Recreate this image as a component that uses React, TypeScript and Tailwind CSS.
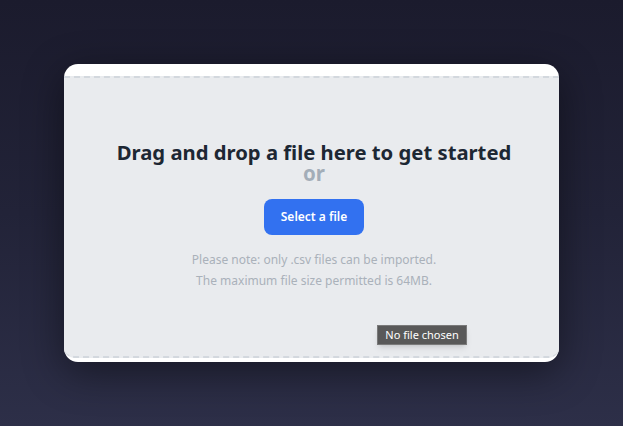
import React from 'react';

const font = { fontFamily: '"Noto Sans", "Open Sans", Arial, sans-serif' };

const App: React.FC = () => {
  return (
    <div
      className="w-[623px] h-[426px] flex items-center justify-center bg-gradient-to-b from-[#1b1b2d] via-[#222338] to-[#2d2f48]"
      style={font}
    >
      {/* Upload card */}
      <div className="w-[495px] h-[298px] bg-white rounded-[14px] shadow-[0_10px_40px_rgba(0,0,0,0.45)] pt-[12px] pb-[4px] flex">
        <div className="relative flex-1 bg-[#e9ebee] border-y-2 border-dashed border-[#d3d8de] rounded-b-[10px] flex flex-col items-center pt-[63px] pl-[5px]">
          <h1 className="text-[20.25px] leading-[22px] font-bold text-[#1d2733]">
            Drag and drop a file here to get started
          </h1>
          <div className="text-[20.5px] leading-[20px] font-bold text-[#a3adb8]">or</div>
          <button className="mt-[16px] w-[100px] h-[36px] rounded-[8px] bg-[#3271f0] text-white text-[12px] font-semibold">
            Select a file
          </button>
          <p className="mt-[14px] text-[12px] leading-[21px] text-[#aab1ba] text-center">
            Please note: only .csv files can be imported.
            <br />
            The maximum file size permitted is 64MB.
          </p>
          <span className="absolute left-[313px] top-[247px] w-[90px] justify-center h-[20px] flex items-center bg-[#595959] border border-[#7a7a7a] text-white text-[11px] shadow-md">
            No file chosen
          </span>
        </div>
      </div>
    </div>
  );
};

export default App;
